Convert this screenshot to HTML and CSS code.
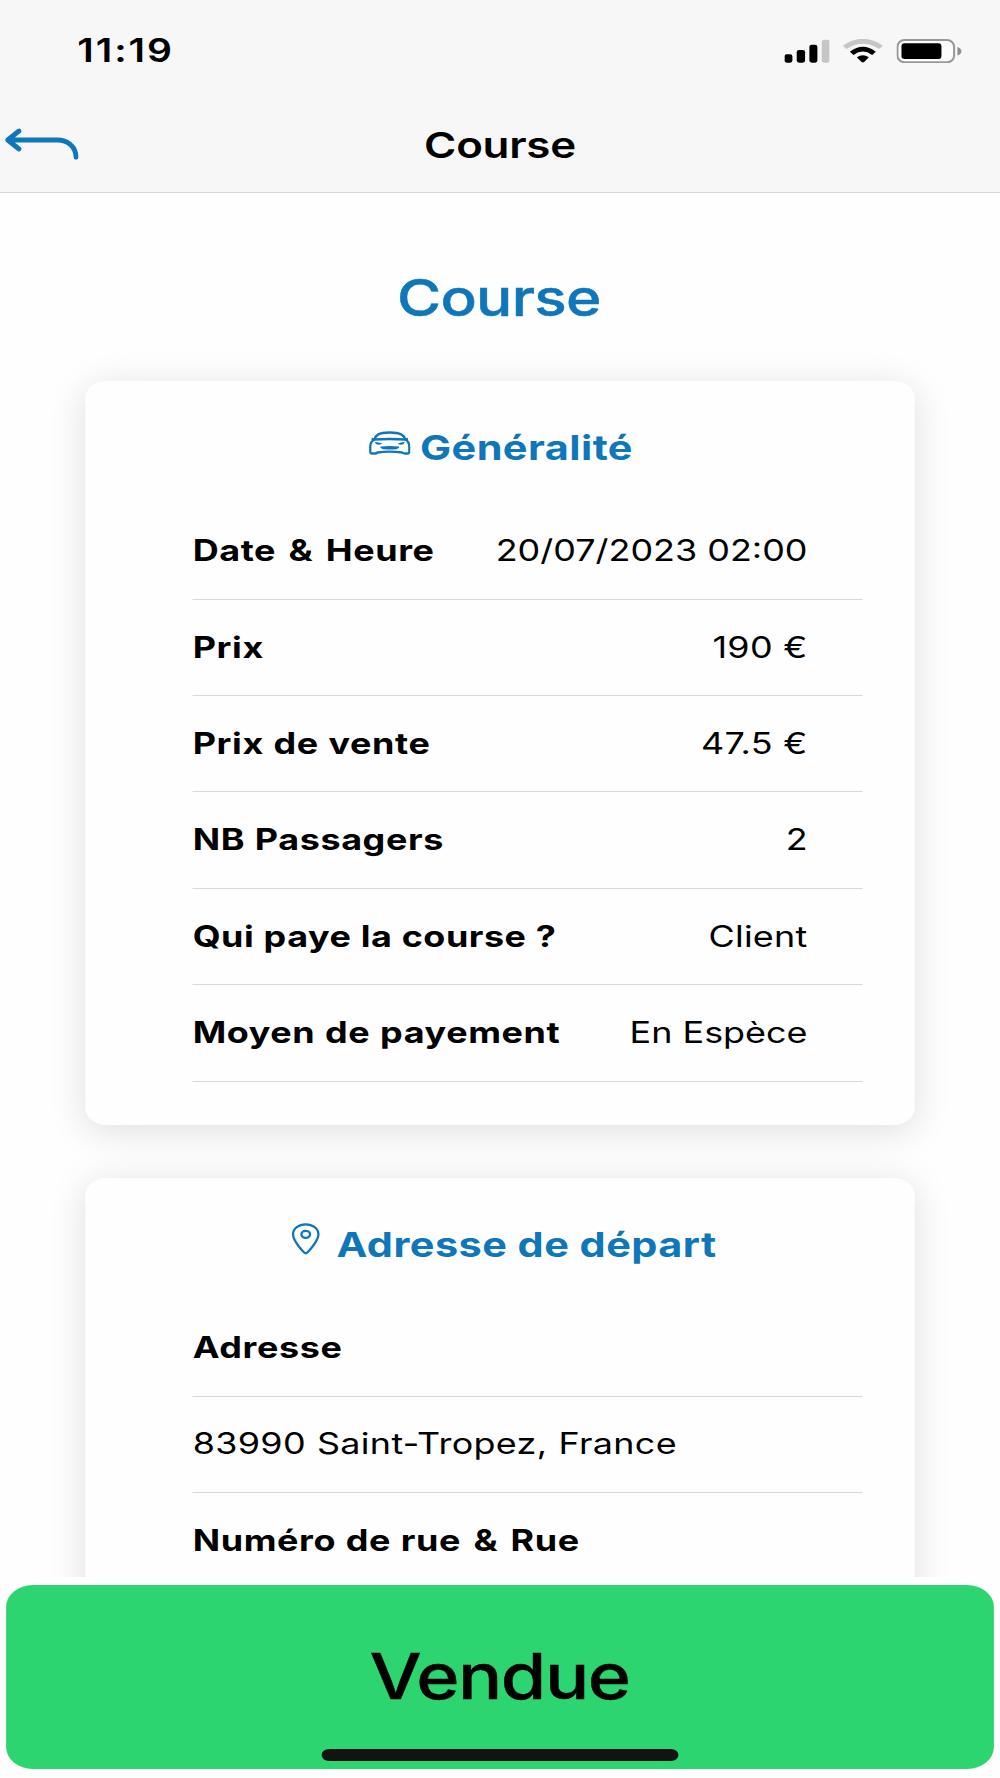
FILE: index.html
```html
<!DOCTYPE html>
<html lang="fr">
<head>
<meta charset="utf-8">
<title>Course</title>
<link rel="stylesheet" href="styles.css">
</head>
<body>
<div class="screen">
  <header class="header">
    <div class="status">
      <span class="time">11:19</span>
      <div class="status-icons">
        <svg class="signal" viewBox="42 40 136 73" preserveAspectRatio="none">
          <rect x="42" y="86" width="24" height="25" rx="7"/>
          <rect x="79" y="73" width="25" height="38" rx="7"/>
          <rect x="117" y="57" width="24" height="54" rx="7"/>
          <rect x="154" y="42" width="24" height="69" rx="7" fill="#c6c6c6"/>
        </svg>
        <svg class="wifi" viewBox="219 40 120 73" preserveAspectRatio="none">
          <path d="M219 60 Q279 19 339 60 L328 70 Q279 38 230 70 Z" fill="#c6c6c6"/>
          <path d="M240 78 Q279 48 318 78 L307 88 Q279 67 251 88 Z"/>
          <path d="M261 95 Q279 82 297 95 L283 109 Q279 112 275 109 Z"/>
        </svg>
        <svg class="battery" viewBox="381 39 196 74" preserveAspectRatio="none">
          <rect x="384" y="42" width="170" height="68" rx="21" fill="#fdfdfd" stroke="#989898" stroke-width="6"/>
          <rect x="396" y="52" width="120" height="48" rx="9"/>
          <path d="M564 63 Q576 67 576 76 Q576 85 564 89 Z" fill="#8e8e8e"/>
        </svg>
      </div>
    </div>
    <div class="navbar">
      <svg class="back" viewBox="0 380 240 110" preserveAspectRatio="none">
        <path d="M57 392 L23 419 L57 446 M24 419 H172 C200 419 228 436 228 471"/>
      </svg>
      <span class="nav-title">Course</span>
      <span class="back-spacer"></span>
    </div>
  </header>
  <main class="content">
    <h1 class="page-title">Course</h1>
    <section class="card">
      <h2 class="card-title">
        <svg class="icon" viewBox="26.500 15.500 124 102" preserveAspectRatio="none">
          <path d="M43 56 C46 43 54 35 88 35 C122 35 131 43 135 56"/>
          <path d="M34 54 L43 56 Q88 53 135 56 L143 54"/>
          <path d="M43 56 C32 61 30 68 30 78 V93 Q30 98 35 98 H44 Q49 98 51 95 Q88 90 126 95 Q129 98 134 98 H142 Q147 98 147 93 V78 C147 68 145 61 135 56"/>
          <path class="solid" d="M43 63 Q55 65 67 69 Q52 75 47 69 Z M134 63 Q122 65 111 69 Q126 75 130 69 Z"/>
          <path class="solid" d="M61 77 Q88 74 116 77 Q119 82 108 85 Q88 87 69 85 Q58 82 61 77 Z"/>
        </svg>
        <span>Généralité</span>
      </h2>
      <dl class="rows">
        <div class="row"><dt>Date <span class="amp">&amp;</span> Heure</dt><dd>20/07/2023 02:00</dd></div>
        <div class="row"><dt>Prix</dt><dd class="amount">190 €</dd></div>
        <div class="row"><dt>Prix de vente</dt><dd class="amount">47.5 €</dd></div>
        <div class="row"><dt>NB Passagers</dt><dd>2</dd></div>
        <div class="row"><dt class="question">Qui paye la course ?</dt><dd class="word">Client</dd></div>
        <div class="row"><dt>Moyen de payement</dt><dd>En Espèce</dd></div>
      </dl>
    </section>
    <section class="card">
      <h2 class="card-title">
        <svg class="icon" viewBox="18 37 124 102" preserveAspectRatio="none">
          <path d="M80 131 C76 131 42 96 42 74 C42 56 59 44 80 44 C101 44 118 56 118 74 C118 96 84 131 80 131 Z"/>
          <ellipse cx="80" cy="74" rx="13" ry="10.500"/>
        </svg>
        <span>Adresse de départ</span>
      </h2>
      <dl class="rows">
        <div class="row"><dt>Adresse</dt></div>
        <div class="row"><dd class="place">83990 Saint-Tropez, France</dd></div>
        <div class="row"><dt>Numéro de rue <span class="amp">&amp;</span> Rue</dt></div>
      </dl>
    </section>
  </main>
  <footer class="footer">
    <button class="sold"><span class="sold-label">Vendue</span><span class="home-indicator"></span></button>
  </footer>
</div>
</body>
</html>
```

FILE: styles.css
```css
* {
  box-sizing: border-box;
}

body {
  margin: 0;
  background: #fff;
  overflow: hidden;
}

/* The phone screen is laid out at 821px and widened to the full 1000px. */
.screen {
  display: flex;
  flex-direction: column;
  width: 821px;
  height: 1778px;
  transform: scaleX(1.218027);
  transform-origin: 0 0;
  font-family: Inter, "Liberation Sans", sans-serif;
  color: #000;
  background: #fefefe;
}

.header {
  flex: none;
  height: 193px;
  background: #f7f7f7;
  border-bottom: 1px solid #d6d6d6;
}

.status {
  display: flex;
  justify-content: space-between;
  align-items: center;
  height: 101px;
  padding: 0 31px 0 63.500px;
}

.time {
  font-size: 32px;
  font-weight: 600;
  letter-spacing: 1.600px;
}

.status-icons {
  display: flex;
  margin-top: 1px;
}

.signal {
  width: 37.2px;
  height: 24.300px;
}

.wifi {
  width: 32.800px;
  height: 24.300px;
  margin: 0 11.500px 0 11.200px;
}

.battery {
  width: 53.600px;
  height: 24.300px;
}

.navbar {
  display: flex;
  justify-content: space-between;
  align-items: center;
  height: 87px;
}

.back {
  width: 65.700px;
  height: 36.700px;
  margin-top: 1px;
  fill: none;
  stroke: #0f77b9;
  stroke-width: 14.500;
  stroke-linecap: round;
  stroke-linejoin: round;
}

.back-spacer {
  width: 65.700px;
}

.nav-title {
  font-size: 36px;
  font-weight: 600;
  letter-spacing: -0.200px;
}

.content {
  flex: none;
  height: 1383.500px;
  overflow: hidden;
}

.page-title {
  margin: 0;
  height: 188px;
  padding: 75px 2px 0 0;
  text-align: center;
  font-size: 51px;
  line-height: 60px;
  font-weight: 500;
  letter-spacing: -0.600px;
  color: #0f77b9;
  -webkit-text-stroke: 0.500px #0f77b9;
  transform: scaleX(0.97);
}

.card {
  margin: 0 70px 52.500px;
  padding-bottom: 43.700px;
  border-radius: 17px;
  background: #fefefe;
  box-shadow: 0 6px 34px rgba(0, 0, 0, 0.13);
}

.card-title {
  display: flex;
  justify-content: center;
  gap: 7.800px;
  margin: 0;
  height: 122.300px;
  padding: 44px 0 0 1.700px;
  font-size: 34px;
  line-height: 46px;
  font-weight: 700;
  letter-spacing: 0.380px;
  color: #0f77b9;
}

.icon {
  width: 34px;
  height: 34px;
  margin-top: 0.500px;
  fill: none;
  stroke: #0f77b9;
  stroke-width: 7;
  stroke-linejoin: round;
}

.icon .solid {
  fill: #0f77b9;
  stroke: none;
}

.rows {
  margin: 0 43.500px 0 87.600px;
}

.row {
  display: flex;
  justify-content: space-between;
  align-items: center;
  height: 96.400px;
  padding: 0 44.500px 1.600px 0.600px;
  border-bottom: 1px solid #d8d8d8;
  font-size: 29.500px;
  white-space: nowrap;
}

.row dt {
  font-weight: 700;
  letter-spacing: 0.500px;
  word-spacing: 0.500px;
}

.row .question {
  letter-spacing: 0.420px;
  word-spacing: 0.300px;
}

.amp {
  padding: 0 2.200px;
}

.row dd {
  margin: 0;
}

.row .amount {
  letter-spacing: 0.250px;
}

.row .word {
  letter-spacing: 0.200px;
}

.row .place {
  letter-spacing: 0.260px;
  word-spacing: 0.500px;
}

.footer {
  flex: 1;
  padding: 8.500px 5px 9.500px 4.500px;
}

.sold {
  display: flex;
  flex-direction: column;
  align-items: center;
  justify-content: space-between;
  width: 100%;
  height: 183.500px;
  padding: 50px 0 8px;
  border: 0;
  border-radius: 22px;
  background: #2cd570;
  color: #000;
  font-family: inherit;
}

.sold-label {
  font-size: 63px;
  line-height: 82px;
  font-weight: 500;
  letter-spacing: -1.300px;
  -webkit-text-stroke: 0.400px #000;
  transform: scaleX(0.96);
}

.home-indicator {
  width: 293px;
  height: 11.500px;
  border-radius: 6px;
  background: #131313;
}
```
